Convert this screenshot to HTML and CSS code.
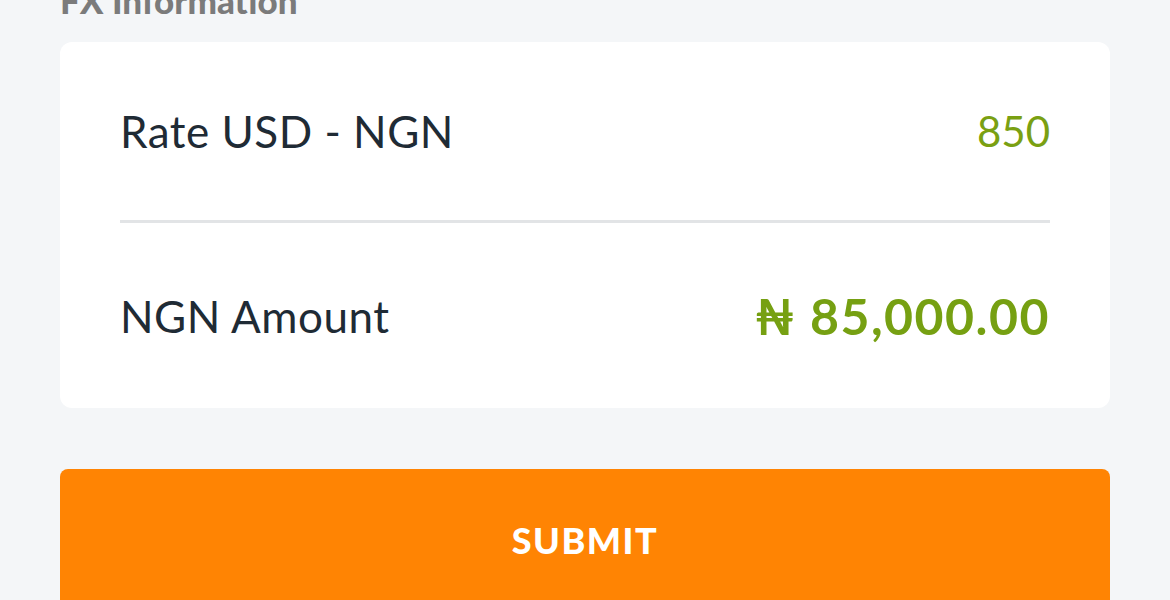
FILE: index.html
```html
<!DOCTYPE html>
<html lang="en">
<head>
    <meta charset="UTF-8">
    <meta name="viewport" content="width=device-width, initial-scale=1.0">
    <title>FX Information</title>
    <link rel="stylesheet" href="styles.css">
</head>
<body>
    <div class="page">
        <h2 class="section-title">FX Information</h2>

        <div class="fx-card">
            <div class="fx-row">
                <span class="fx-label">Rate USD - NGN</span>
                <span class="fx-rate">850</span>
            </div>
            <div class="fx-divider"></div>
            <div class="fx-row fx-row-last">
                <span class="fx-label">NGN Amount</span>
                <span class="fx-amount">₦ 85,000.00</span>
            </div>
        </div>

        <button class="submit-btn">SUBMIT</button>
    </div>
</body>
</html>
```

FILE: styles.css
```css
/* Estilos generales */
body {
    margin: 0;
    padding: 0;
    background-color: #f4f6f8;
    font-family: Lato, "Noto Sans", sans-serif;
    overflow: hidden;
}

.page {
    padding: 0 60px;
    margin-top: -22px;
}

.section-title {
    margin: 0 0 20px;
    font-size: 35px;
    line-height: 44px;
    font-weight: 900;
    color: #7b7b7b;
}

/* Tarjeta */
.fx-card {
    background-color: #ffffff;
    border-radius: 12px;
    padding: 0 60px;
}

.fx-row {
    display: flex;
    justify-content: space-between;
    align-items: center;
    height: 178px;
}

.fx-row-last {
    height: 185px;
}

.fx-label {
    font-size: 44px;
    letter-spacing: 0.5px;
    color: #1f2b35;
}

.fx-rate {
    font-size: 42px;
    color: #7aa012;
}

.fx-amount {
    font-size: 50px;
    font-weight: 700;
    letter-spacing: 1.5px;
    color: #76a012;
}

.fx-divider {
    height: 3px;
    background-color: #e2e4e6;
}

/* Boton */
.submit-btn {
    display: block;
    width: 100%;
    height: 150px;
    margin-top: 61px;
    border: none;
    border-radius: 8px;
    background-color: #ff8403;
    color: #ffffff;
    font-family: Lato, "Noto Sans", sans-serif;
    font-size: 36px;
    font-weight: 900;
    letter-spacing: 1.5px;
    padding: 0 0 8px;
    cursor: pointer;
}
```
